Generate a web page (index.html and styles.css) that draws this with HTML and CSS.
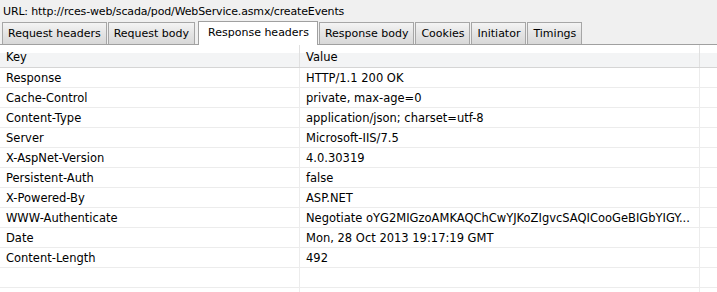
FILE: index.html
```html
<!DOCTYPE html>
<html lang="en">
<head>
  <meta charset="UTF-8" />
  <title>createEvents - Response headers</title>
  <link rel="stylesheet" href="styles.css">
</head>
<body>
  <div class="url">URL: http://rces-web/scada/pod/WebService.asmx/createEvents</div>
  <div class="tabs">
    <div class="tab">Request headers</div>
    <div class="tab">Request body</div>
    <div class="tab active">Response headers</div>
    <div class="tab">Response body</div>
    <div class="tab">Cookies</div>
    <div class="tab">Initiator</div>
    <div class="tab">Timings</div>
  </div>
  <div class="grid">
    <div class="row head">
      <div class="cell">Key</div>
      <div class="cell">Value</div>
      <div class="cell"></div>
    </div>
    <div class="row"><div class="cell">Response</div><div class="cell">HTTP/1.1 200 OK</div><div class="cell"></div></div>
    <div class="row"><div class="cell">Cache-Control</div><div class="cell">private, max-age=0</div><div class="cell"></div></div>
    <div class="row"><div class="cell">Content-Type</div><div class="cell">application/json; charset=utf-8</div><div class="cell"></div></div>
    <div class="row"><div class="cell">Server</div><div class="cell">Microsoft-IIS/7.5</div><div class="cell"></div></div>
    <div class="row"><div class="cell">X-AspNet-Version</div><div class="cell">4.0.30319</div><div class="cell"></div></div>
    <div class="row"><div class="cell">Persistent-Auth</div><div class="cell">false</div><div class="cell"></div></div>
    <div class="row"><div class="cell">X-Powered-By</div><div class="cell">ASP.NET</div><div class="cell"></div></div>
    <div class="row"><div class="cell">WWW-Authenticate</div><div class="cell">Negotiate oYG2MIGzoAMKAQChCwYJKoZIgvcSAQICooGeBIGbYIGY...</div><div class="cell"></div></div>
    <div class="row"><div class="cell">Date</div><div class="cell">Mon, 28 Oct 2013 19:17:19 GMT</div><div class="cell"></div></div>
    <div class="row"><div class="cell">Content-Length</div><div class="cell">492</div><div class="cell"></div></div>
    <div class="row"><div class="cell"></div><div class="cell"></div><div class="cell"></div></div>
    <div class="row filler"><div class="cell"></div><div class="cell"></div><div class="cell"></div></div>
  </div>
</body>
</html>
```

FILE: styles.css
```css
* {
  box-sizing: border-box;
}
body {
  margin: 0;
  height: 292px;
  overflow: hidden;
  display: flex;
  flex-direction: column;
  font-family: "DejaVu Sans", Tahoma, sans-serif;
  font-size: 11px;
  color: #000;
  background: #fff;
}
.url {
  flex: none;
  height: 22px;
  line-height: 20px;
  padding: 2px 0 0 3px;
  background: #f0f0f0;
  white-space: nowrap;
  letter-spacing: -0.15px;
}
.tabs {
  flex: none;
  display: flex;
  align-items: flex-end;
  gap: 1px;
  height: 23px;
  padding-left: 2px;
  background: #f0f0f0;
  border-bottom: 1px solid #a0a0a0;
}
.tab {
  height: 22px;
  line-height: 18px;
  padding: 2px 5px 0;
  border: 1px solid #a6a6a6;
  border-bottom: none;
  background: linear-gradient(#f4f4f4, #e4e4e4 50%, #d8d8d8);
  white-space: nowrap;
}
.tab.active {
  height: 24px;
  line-height: 20px;
  margin: 0 0 -1px 2px;
  padding: 1px 8px 0 9px;
  background: #fff;
  border-color: #a0a0a0;
  position: relative;
}
.grid {
  flex: 1;
  min-height: 0;
  display: flex;
  flex-direction: column;
  font-size: 11.5px;
}
.row {
  display: grid;
  grid-template-columns: 300px 400px 17px;
  flex: none;
  height: 20px;
  border-bottom: 1px solid #ececec;
}
.row.head {
  height: 23px;
  border-bottom: 1px solid #d5d5d5;
  background: linear-gradient(#fff 0, #fff 35%, #f3f4f5 36%, #f3f4f5 100%);
}
.row.filler {
  flex: 1;
  height: auto;
  border-bottom: none;
}
.cell {
  padding: 2px 0 0 6px;
  line-height: 17px;
  white-space: nowrap;
  overflow: hidden;
  border-right: 1px solid #ececec;
}
.row.head .cell {
  padding-top: 3px;
  line-height: 19px;
  border-right-color: #e0e0e0;
}
.row .cell:last-child {
  border-right: none;
}
```
